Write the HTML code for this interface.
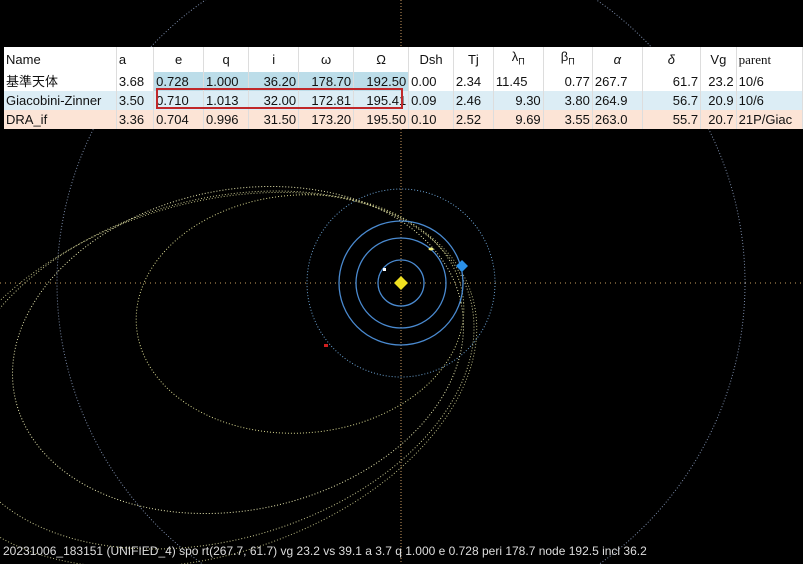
<!DOCTYPE html>
<html><head><meta charset="utf-8"><style>
html,body{margin:0;width:803px;height:564px;overflow:hidden}
body{background:#000;position:relative;font-family:"Liberation Sans","Noto Sans CJK JP",sans-serif}
svg{position:absolute;left:0;top:0}
table{position:absolute;left:4px;top:47px;border-collapse:collapse;background:#fff;font-size:13px;color:#111}
td{height:19px;padding:0 2px;border-right:1px solid #ddd;white-space:nowrap;line-height:19px}
tr.h td{height:21px}
.r1 .b{background:#bcdde9}
.r2 td{background:#dcedf5}
.r3 td{background:#fce4d6}
.c{text-align:center}.r{text-align:right}
#box{position:absolute;left:156px;top:88px;width:243px;height:17px;border:2px solid #c0282a}
#st{position:absolute;left:3px;top:543px;height:16px;line-height:16px;color:#ddd;font-size:12px}
</style></head><body>
<svg width="803" height="564">
<g fill="none" stroke-dasharray="1 2">
<line x1="401" y1="0" x2="401" y2="564" stroke="#c89860"/>
<line x1="0" y1="283" x2="803" y2="283" stroke="#c8a060" stroke-dasharray="1 4"/>
<circle cx="401" cy="283" r="344" stroke="#7a8aa8"/>
<circle cx="401" cy="283" r="94" stroke="#6aa0d0"/>
<ellipse cx="300" cy="314" rx="164" ry="119" stroke="#d8d890" transform="rotate(-4 300 314)"/>
<ellipse cx="238" cy="350" rx="228" ry="160" stroke="#e8e8b0" transform="rotate(-12 238 350)"/>
<ellipse cx="215" cy="370" rx="265" ry="170" stroke="#c8c890" transform="rotate(-16 215 370)"/>
<ellipse cx="205" cy="380" rx="280" ry="175" stroke="#b8b880" transform="rotate(-18 205 380)"/>
</g>
<g fill="none" stroke="#4a8ad0" stroke-width="1.3">
<circle cx="401" cy="283" r="23"/>
<circle cx="401" cy="283" r="45"/>
<circle cx="401" cy="283" r="62"/>
</g>
<polygon points="401,276 408,283 401,290 394,283" fill="#f0e020"/>
<polygon points="462,260 468,266 462,272 456,266" fill="#2a90e8"/>
<rect x="383" y="268" width="3" height="3" fill="#fff"/>
<ellipse cx="431" cy="249" rx="2.5" ry="1.5" fill="#f0f080"/>
<rect x="324" y="344" width="4" height="3" fill="#d02020"/>
</svg>
<table>
<tr class="h"><td style="width:109px">Name</td><td style="width:33px">a</td><td class="c" style="width:46px">e</td><td class="c" style="width:41px">q</td><td class="c" style="width:46px">i</td><td class="c" style="width:51px">ω</td><td class="c" style="width:51px">Ω</td><td class="c" style="width:41px">Dsh</td><td class="c" style="width:36px">Tj</td><td class="c" style="width:46px">λ<sub style="font-size:9px">Π</sub></td><td class="c" style="width:46px">β<sub style="font-size:9px">Π</sub></td><td class="c" style="width:46px"><i>α</i></td><td class="c" style="width:56px"><i>δ</i></td><td class="c" style="width:31px">Vg</td><td style="width:62px;font-family:'Liberation Serif',serif">parent</td></tr>
<tr class="r1"><td>基準天体</td><td>3.68</td><td class="b">0.728</td><td class="b">1.000</td><td class="b r">36.20</td><td class="b r">178.70</td><td class="b r">192.50</td><td>0.00</td><td>2.34</td><td>11.45</td><td class="r">0.77</td><td>267.7</td><td class="r">61.7</td><td class="r">23.2</td><td>10/6</td></tr>
<tr class="r2"><td>Giacobini-Zinner</td><td>3.50</td><td>0.710</td><td>1.013</td><td class="r">32.00</td><td class="r">172.81</td><td class="r">195.41</td><td>0.09</td><td>2.46</td><td class="r">9.30</td><td class="r">3.80</td><td>264.9</td><td class="r">56.7</td><td class="r">20.9</td><td>10/6</td></tr>
<tr class="r3"><td>DRA_if</td><td>3.36</td><td>0.704</td><td>0.996</td><td class="r">31.50</td><td class="r">173.20</td><td class="r">195.50</td><td>0.10</td><td>2.52</td><td class="r">9.69</td><td class="r">3.55</td><td>263.0</td><td class="r">55.7</td><td class="r">20.7</td><td>21P/Giac</td></tr>
</table>
<div id="box"></div>
<div id="st">20231006_183151 (UNIFIED_4) spo rt(267.7, 61.7) vg 23.2 vs 39.1 a 3.7 q 1.000 e 0.728 peri 178.7 node 192.5 incl 36.2</div>
</body></html>
